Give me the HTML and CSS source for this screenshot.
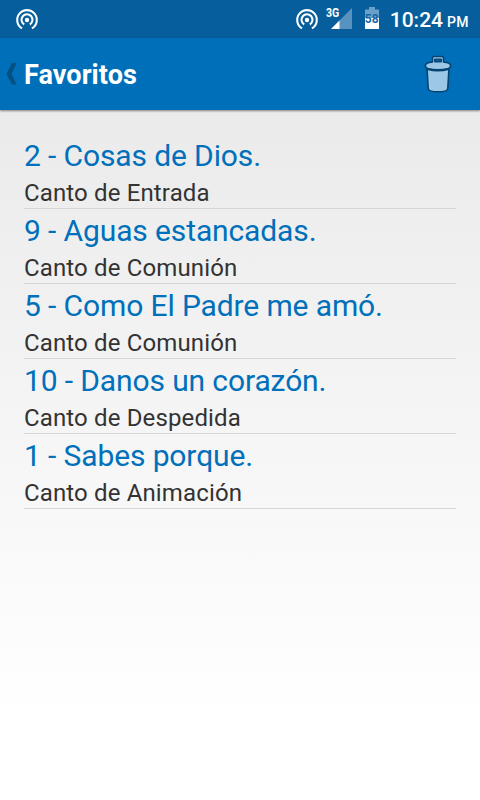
FILE: index.html
```html
<!DOCTYPE html>
<html lang="es">
<head>
<meta charset="utf-8">
<title>Favoritos</title>
<link rel="stylesheet" href="styles.css">
</head>
<body>
<div class="status">
  <svg class="hotspot" width="24" height="24" viewBox="0 0 24 24"><g fill="none" stroke="#fff" stroke-width="2.1"><path d="M7 20.4A9.8 9.8 0 1 1 17 20.4"/><path d="M9.2 16.5A5.5 5.5 0 1 1 14.8 16.5"/></g><circle cx="12" cy="12" r="2.2" fill="#fff"/></svg>
  <div class="indicators">
    <svg class="hotspot" width="24" height="24" viewBox="0 0 24 24"><g fill="none" stroke="#fff" stroke-width="2.1"><path d="M7 20.4A9.8 9.8 0 1 1 17 20.4"/><path d="M9.2 16.5A5.5 5.5 0 1 1 14.8 16.5"/></g><circle cx="12" cy="12" r="2.2" fill="#fff"/></svg>
    <div class="signal">
      <svg width="27" height="22" viewBox="0 0 27 22"><path d="M26 0V21H5Z" fill="#5893bf"/><path d="M13.5 12.5V21H5Z" fill="#fff"/></svg>
      <span class="network">3G</span>
    </div>
    <div class="battery">
      <svg width="14" height="22" viewBox="0 0 14 22"><path d="M4 -1H10V1.5H14V10H0V1.5H4Z" fill="#69a0c9"/><path d="M0 10H14V21H0Z" fill="#fff"/></svg>
      <span class="level">58</span>
    </div>
    <span class="time">10:24</span><span class="period">PM</span>
  </div>
</div>
<header class="bar">
  <svg class="back" width="12" height="22" viewBox="0 0 12 22"><path d="M6 0H10.5L5.5 11L10.5 21.5H6L.5 11Z" fill="#045083"/></svg>
  <h1 class="heading">Favoritos</h1>
  <svg class="trash" width="28" height="38" viewBox="0 0 28 38"><g fill="#9cc7e5" stroke="#064270" stroke-width="1.6" stroke-linejoin="round"><path d="M3 13L4.2 33.5Q4.5 36.8 14 36.8T23.8 33.5L25 13Z"/><path d="M8.500 7V3Q8.5 1.5 10 1.5H18Q19.5 1.5 19.5 3V7C24 7.5 26.7 9 26.7 10.8C26.7 13.5 21.5 14.8 14 14.8S1.3 13.5 1.3 10.8C1.3 9 4 7.5 8.5 7Z"/></g><path d="M10.5 4H17.5V7H10.5Z" fill="#075991" stroke="#064270"/><path d="M3.3 14Q14 17 24.7 14" fill="none" stroke="#064270" stroke-width="2"/></svg>
</header>
<ul class="songs">
  <li class="song"><div class="title">2 - Cosas de Dios.</div><div class="kind">Canto de Entrada</div></li>
  <li class="song"><div class="title">9 - Aguas estancadas.</div><div class="kind">Canto de Comunión</div></li>
  <li class="song"><div class="title">5 - Como El Padre me amó.</div><div class="kind">Canto de Comunión</div></li>
  <li class="song"><div class="title">10 - Danos un corazón.</div><div class="kind">Canto de Despedida</div></li>
  <li class="song"><div class="title">1 - Sabes porque.</div><div class="kind">Canto de Animación</div></li>
</ul>
</body>
</html>
```
FILE: styles.css
```css
* { box-sizing: border-box; }
body {
  margin: 0;
  width: 480px;
  height: 800px;
  overflow: hidden;
  font-family: Roboto, "Liberation Sans", sans-serif;
  background: linear-gradient(#e8e8e8 38px, #fff 720px);
}
svg { display: block; flex: none; overflow: visible; }
.status {
  height: 38px;
  padding: 0 11px 0 15px;
  display: flex;
  align-items: center;
  justify-content: space-between;
  background: #065f9c;
  color: #fff;
}
.hotspot { margin-top: 2px; }
.indicators { display: flex; align-items: center; }
.signal { position: relative; margin: 0 12px 0 7px; }
.network {
  position: absolute;
  left: 0;
  top: -1px;
  font: 700 12.5px/12px Roboto, sans-serif;
  transform: scaleX(.84);
  transform-origin: left;
}
.battery { position: relative; margin-right: 11px; }
.level {
  position: absolute;
  left: 0;
  top: 4px;
  width: 14px;
  text-align: center;
  font: 700 12px/14px Roboto, sans-serif;
  color: #1769a5;
}
.time { font-size: 21px; line-height: 38px; font-weight: 500; margin-top: 2px; }
.period { font-size: 14px; line-height: 38px; font-weight: 500; margin: 6px 0 0 4px; letter-spacing: .4px; }
.bar {
  height: 72px;
  padding: 0 28px 0 6px;
  display: flex;
  align-items: center;
  background: #006fba;
  box-shadow: 0 1px 2px rgba(0, 0, 0, .45);
}
.heading {
  flex: 1;
  margin: 2px 0 0 6px;
  font-size: 27px;
  line-height: 32px;
  font-weight: 700;
  letter-spacing: .08px;
  color: #fff;
}
.songs { list-style: none; margin: 0; padding: 24px 24px 0; }
.song { height: 75px; border-bottom: 1px solid #d6d6d6; white-space: nowrap; }
.title { font-size: 30px; line-height: 44px; letter-spacing: -.12px; color: #0070bb; }
.kind { font-size: 24px; line-height: 30px; letter-spacing: .14px; color: #333; }
```
